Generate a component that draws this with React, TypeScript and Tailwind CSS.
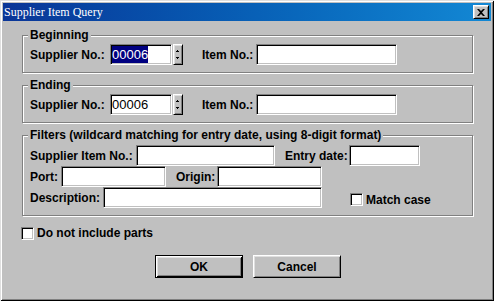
import React from "react";

const sunken =
  "bg-white border border-t-[#808080] border-l-[#808080] border-r-white border-b-white shadow-[inset_1px_1px_0_#000,inset_-1px_-1px_0_#c0c0c0]";
const raised =
  "bg-[#c0c0c0] border border-t-white border-l-white border-r-black border-b-black shadow-[inset_1px_1px_0_#dfdfdf,inset_-1px_-1px_0_#808080]";
const group =
  "m-0 w-[451px] min-w-0 border border-[#808080] shadow-[1px_1px_0_#fff,inset_1px_1px_0_#fff] pl-[7px] pr-0 pt-[2px] pb-[7px]";
const legend = "-ml-[2px] px-[2px] bg-[#c0c0c0] leading-[14px]";

const Field = ({ w, children }: { w: string; children?: React.ReactNode }) => (
  <div className={`${w} h-[21px] shrink-0 ${sunken} flex items-center pl-[1px] font-normal text-[13px] leading-none`}>
    {children}
  </div>
);

const Spinner = () => (
  <div className={`ml-[1px] w-[10px] h-[21px] shrink-0 ${raised}`}>
    <svg width="8" height="19" viewBox="0 0 8 19" className="block">
      <rect x="3" y="5" width="1" height="1" fill="#000" />
      <rect x="2" y="6" width="3" height="1" fill="#000" />
      <rect x="2" y="12" width="3" height="1" fill="#000" />
      <rect x="3" y="13" width="1" height="1" fill="#000" />
    </svg>
  </div>
);

const Check = () => <div className={`w-[13px] h-[13px] shrink-0 ${sunken}`} />;

const RangeRow = ({ selected }: { selected?: boolean }) => (
  <div className="flex items-center h-[21px]">
    <span className="w-[80px] shrink-0">Supplier No.:</span>
    <Field w="w-[62px]">
      {selected ? <span className="bg-[#000080] text-white py-[2px]">00006</span> : <span>00006</span>}
    </Field>
    <Spinner />
    <span className="ml-[19px] w-[54px] shrink-0">Item No.:</span>
    <Field w="w-[141px]" />
  </div>
);

export default function App() {
  return (
    <div className="w-[494px] h-[301px] bg-[#c0c0c0] p-[3px] shadow-[inset_1px_1px_0_#dfdfdf,inset_-1px_-1px_0_#000,inset_2px_2px_0_#fff,inset_-2px_-2px_0_#808080] font-['Liberation_Sans',Arial,sans-serif] text-[12px] font-bold text-black flex flex-col overflow-hidden">
      <div className="h-[18px] flex items-center justify-between pl-[1px] pr-[2px] bg-linear-to-r from-[#0a3597] to-[#1388d4]">
        <span className="font-['Liberation_Serif',serif] font-normal text-[12px] text-white leading-none">
          Supplier Item Query
        </span>
        <div className={`w-[16px] h-[14px] ${raised} flex items-center justify-center`}>
          <svg width="8" height="7" viewBox="0 0 8 7" className="block">
            <path d="M0 0h2l2 2 2-2h2L5 3.5 8 7H6L4 5 2 7H0l3-3.5z" fill="#000" />
          </svg>
        </div>
      </div>

      <div className="flex flex-col pl-[19px] pt-[7px]">
        <fieldset className={group}>
          <legend className={legend}>Beginning</legend>
          <RangeRow selected />
        </fieldset>

        <fieldset className={`${group} mt-[5px]`}>
          <legend className={legend}>Ending</legend>
          <RangeRow />
        </fieldset>

        <fieldset className={`${group} mt-[5px] pt-[3px]`}>
          <legend className={legend}>Filters (wildcard matching for entry date, using 8-digit format)</legend>
          <div className="flex items-center h-[21px]">
            <span className="w-[106px] shrink-0">Supplier Item No.:</span>
            <Field w="w-[139px]" />
            <span className="ml-[10px] w-[64px] shrink-0">Entry date:</span>
            <Field w="w-[71px]" />
          </div>
          <div className="flex items-center h-[21px]">
            <span className="w-[31px] shrink-0">Port:</span>
            <Field w="w-[105px]" />
            <span className="ml-[10px] w-[41px] shrink-0">Origin:</span>
            <Field w="w-[105px]" />
          </div>
          <div className="flex items-center h-[21px]">
            <span className="w-[73px] shrink-0">Description:</span>
            <Field w="w-[219px]" />
            <div className="ml-[28px] mt-[4px] flex items-center gap-[3px]">
              <Check />
              <span>Match case</span>
            </div>
          </div>
        </fieldset>

        <div className="mt-[8px] -ml-[1px] flex items-center gap-[3px]">
          <Check />
          <span>Do not include parts</span>
        </div>

        <div className="mt-[13px] ml-[133px] flex gap-[10px]">
          <button className="w-[88px] h-[23px] border border-black shadow-[inset_1px_1px_0_#fff,inset_-1px_-1px_0_#000,inset_2px_2px_0_#dfdfdf,inset_-2px_-2px_0_#808080] bg-[#c0c0c0] font-bold text-[12px]">
            OK
          </button>
          <button className={`w-[88px] h-[23px] ${raised} font-bold text-[12px]`}>Cancel</button>
        </div>
      </div>
    </div>
  );
}
